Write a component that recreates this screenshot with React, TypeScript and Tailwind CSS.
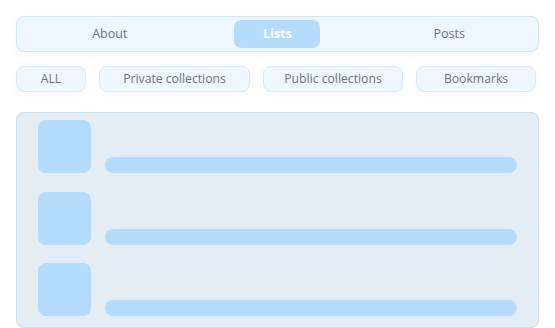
import React from "react";

export default function App() {
  const chips = [
    { label: "ALL", w: "w-[70px]" },
    { label: "Private collections", w: "w-[151px]" },
    { label: "Public collections", w: "w-[140px]" },
    { label: "Bookmarks", w: "w-[120px]" },
  ];
  return (
    <div
      className="w-[555px] h-[328px] bg-white overflow-hidden"
      style={{ fontFamily: '"Open Sans", "Noto Sans", sans-serif' }}
    >
      <div className="pl-[16px] pr-[16px] pt-[16px]">
        <div className="h-[36px] rounded-[8px] border border-[#cde6fb] bg-[#eef6ff] grid grid-cols-3 items-center px-[3px] shadow-[0_2px_8px_rgba(180,200,240,0.12)]">
          <div className="flex justify-center text-[12.5px] text-[#6b7280] pl-[8px] pt-[1px]">About</div>
          <div className="flex justify-center">
            <div className="w-[86px] h-[28px] rounded-[7px] bg-[#b5dbfb] flex items-center justify-center text-white font-bold text-[12.5px] pt-[1px]">
              Lists
            </div>
          </div>
          <div className="flex justify-center text-[12.5px] text-[#6b7280] pt-[1px]">Posts</div>
        </div>
        <div className="mt-[14px] w-[520px] flex justify-between">
          {chips.map((c) => (
            <div
              key={c.label}
              className={`${c.w} h-[26px] rounded-[8px] border border-[#d8ebfc] bg-[#eef6ff] flex items-center justify-center text-[12.2px] text-[#6b7280] pt-[1px] shadow-[0_2px_8px_rgba(180,200,240,0.12)]`}
            >
              {c.label}
            </div>
          ))}
        </div>
        <div className="mt-[20px] h-[216px] rounded-[8px] border border-[#c4e0f4] bg-[#e4ecf4] pl-[21px] pr-[21px] pt-[7px] flex flex-col gap-[18.5px]">
          {[0, 1, 2].map((i) => (
            <div key={i} className="flex items-end gap-[14px]">
              <div className="w-[53px] h-[53px] rounded-[8px] bg-[#b5dbfb] shrink-0" />
              <div className="flex-1 h-[16px] rounded-full bg-[#b5dbfb]" />
            </div>
          ))}
        </div>
      </div>
    </div>
  );
}
